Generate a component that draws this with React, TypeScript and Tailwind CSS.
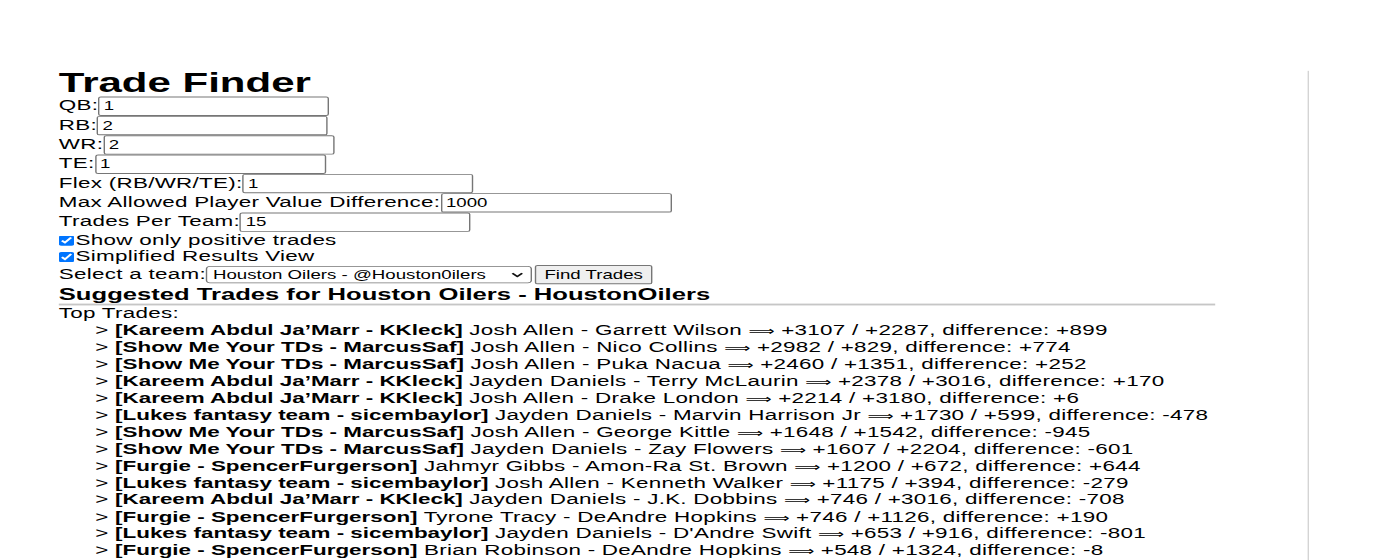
import React from "react";

const fields = [
  { label: "QB:", value: "1" },
  { label: "RB:", value: "2" },
  { label: "WR:", value: "2" },
  { label: "TE:", value: "1" },
  { label: "Flex (RB/WR/TE):", value: "1" },
  { label: "Max Allowed Player Value Difference:", value: "1000" },
  { label: "Trades Per Team:", value: "15" },
];

const trades: { team: string; players: string; values: string }[] = [
  { team: "[Kareem Abdul Ja\u2019Marr - KKleck]", players: "Josh Allen - Garrett Wilson", values: "+3107 / +2287, difference: +899" },
  { team: "[Show Me Your TDs - MarcusSaf]", players: "Josh Allen - Nico Collins", values: "+2982 / +829, difference: +774" },
  { team: "[Show Me Your TDs - MarcusSaf]", players: "Josh Allen - Puka Nacua", values: "+2460 / +1351, difference: +252" },
  { team: "[Kareem Abdul Ja\u2019Marr - KKleck]", players: "Jayden Daniels - Terry McLaurin", values: "+2378 / +3016, difference: +170" },
  { team: "[Kareem Abdul Ja\u2019Marr - KKleck]", players: "Josh Allen - Drake London", values: "+2214 / +3180, difference: +6" },
  { team: "[Lukes fantasy team - sicembaylor]", players: "Jayden Daniels - Marvin Harrison Jr", values: "+1730 / +599, difference: -478" },
  { team: "[Show Me Your TDs - MarcusSaf]", players: "Josh Allen - George Kittle", values: "+1648 / +1542, difference: -945" },
  { team: "[Show Me Your TDs - MarcusSaf]", players: "Jayden Daniels - Zay Flowers", values: "+1607 / +2204, difference: -601" },
  { team: "[Furgie - SpencerFurgerson]", players: "Jahmyr Gibbs - Amon-Ra St. Brown", values: "+1200 / +672, difference: +644" },
  { team: "[Lukes fantasy team - sicembaylor]", players: "Josh Allen - Kenneth Walker", values: "+1175 / +394, difference: -279" },
  { team: "[Kareem Abdul Ja\u2019Marr - KKleck]", players: "Jayden Daniels - J.K. Dobbins", values: "+746 / +3016, difference: -708" },
  { team: "[Furgie - SpencerFurgerson]", players: "Tyrone Tracy - DeAndre Hopkins", values: "+746 / +1126, difference: +190" },
  { team: "[Lukes fantasy team - sicembaylor]", players: "Jayden Daniels - D'Andre Swift", values: "+653 / +916, difference: -801" },
  { team: "[Furgie - SpencerFurgerson]", players: "Brian Robinson - DeAndre Hopkins", values: "+548 / +1324, difference: -8" },
];

export default function App() {
  return (
    <div className="w-[1400px] h-[560px] overflow-hidden bg-white text-black font-['Liberation_Sans',Arial,sans-serif]">
      <div className="w-[1000px] h-[680px] origin-top-left scale-x-[1.4] scale-y-[0.92] flex">
        <main className="w-[934px] shrink-0 pl-[42px] pt-[75px] text-[16px] leading-[18.4px] tracking-[0.2px]">
          <h1 className="text-[30px] leading-[30px] font-bold tracking-normal">Trade Finder</h1>
          {fields.map((f) => (
            <div key={f.label} className="flex items-center h-[21px]">
              <label className="whitespace-nowrap">{f.label}</label>
              <input
                type="text"
                defaultValue={f.value}
                className="w-[165px] h-[21px] border border-[#767676] rounded-[2px] bg-white px-[3px] text-[13.33px] tracking-normal text-black outline-none"
              />
            </div>
          ))}
          <div className="flex items-center h-[18px]">
            <input type="checkbox" defaultChecked className="w-[11px] h-[11px] m-0 mr-[1px] accent-[#0075ff]" />
            <span>Show only positive trades</span>
          </div>
          <div className="flex items-center h-[18px]">
            <input type="checkbox" defaultChecked className="w-[11px] h-[11px] m-0 mr-[1px] accent-[#0075ff]" />
            <span>Simplified Results View</span>
          </div>
          <div className="flex items-center h-[21px]">
            <label className="whitespace-nowrap">Select a team:</label>
            <div className="relative w-[233px] h-[19px]">
              <select
                defaultValue="houston"
                className="appearance-none w-full h-full border border-[#767676] rounded-[3px] bg-white pl-[4px] text-[13.33px] leading-[17px] tracking-normal text-black outline-none"
              >
                <option value="houston">Houston Oilers - @Houston0ilers</option>
              </select>
              <svg
                className="absolute right-[6px] top-[7px] pointer-events-none"
                width="9"
                height="6"
                viewBox="0 0 9 6"
                fill="none"
              >
                <path d="M1 1 L4.5 4.5 L8 1" stroke="#111" strokeWidth="1.6" />
              </svg>
            </div>
            <button className="ml-[2px] w-[84px] h-[21px] bg-[#efefef] border border-[#767676] rounded-[2px] text-[13.33px] leading-[15px] tracking-normal text-black">
              Find Trades
            </button>
          </div>
          <h3 className="w-[826px] text-[18.3px] leading-[21px] font-bold tracking-normal border-b-2 border-[#c6c6c6] whitespace-nowrap">
            Suggested Trades for Houston Oilers - HoustonOilers
          </h3>
          <div>Top Trades:</div>
          <div className="pl-[26px]">
            {trades.map((t, i) => (
              <div key={i} className="whitespace-nowrap h-[18.4px]">
                {"> "}
                <b className="font-bold tracking-normal">{t.team}</b> {t.players}{" "}
                <span className="font-['DejaVu_Sans',sans-serif] text-[13px] leading-none tracking-normal">{"\u27F9"}</span>{" "}
                {t.values}
              </div>
            ))}
          </div>
        </main>
        <aside className="flex-1 mt-[77px] border-l border-[#d4d4d4]" />
      </div>
    </div>
  );
}
